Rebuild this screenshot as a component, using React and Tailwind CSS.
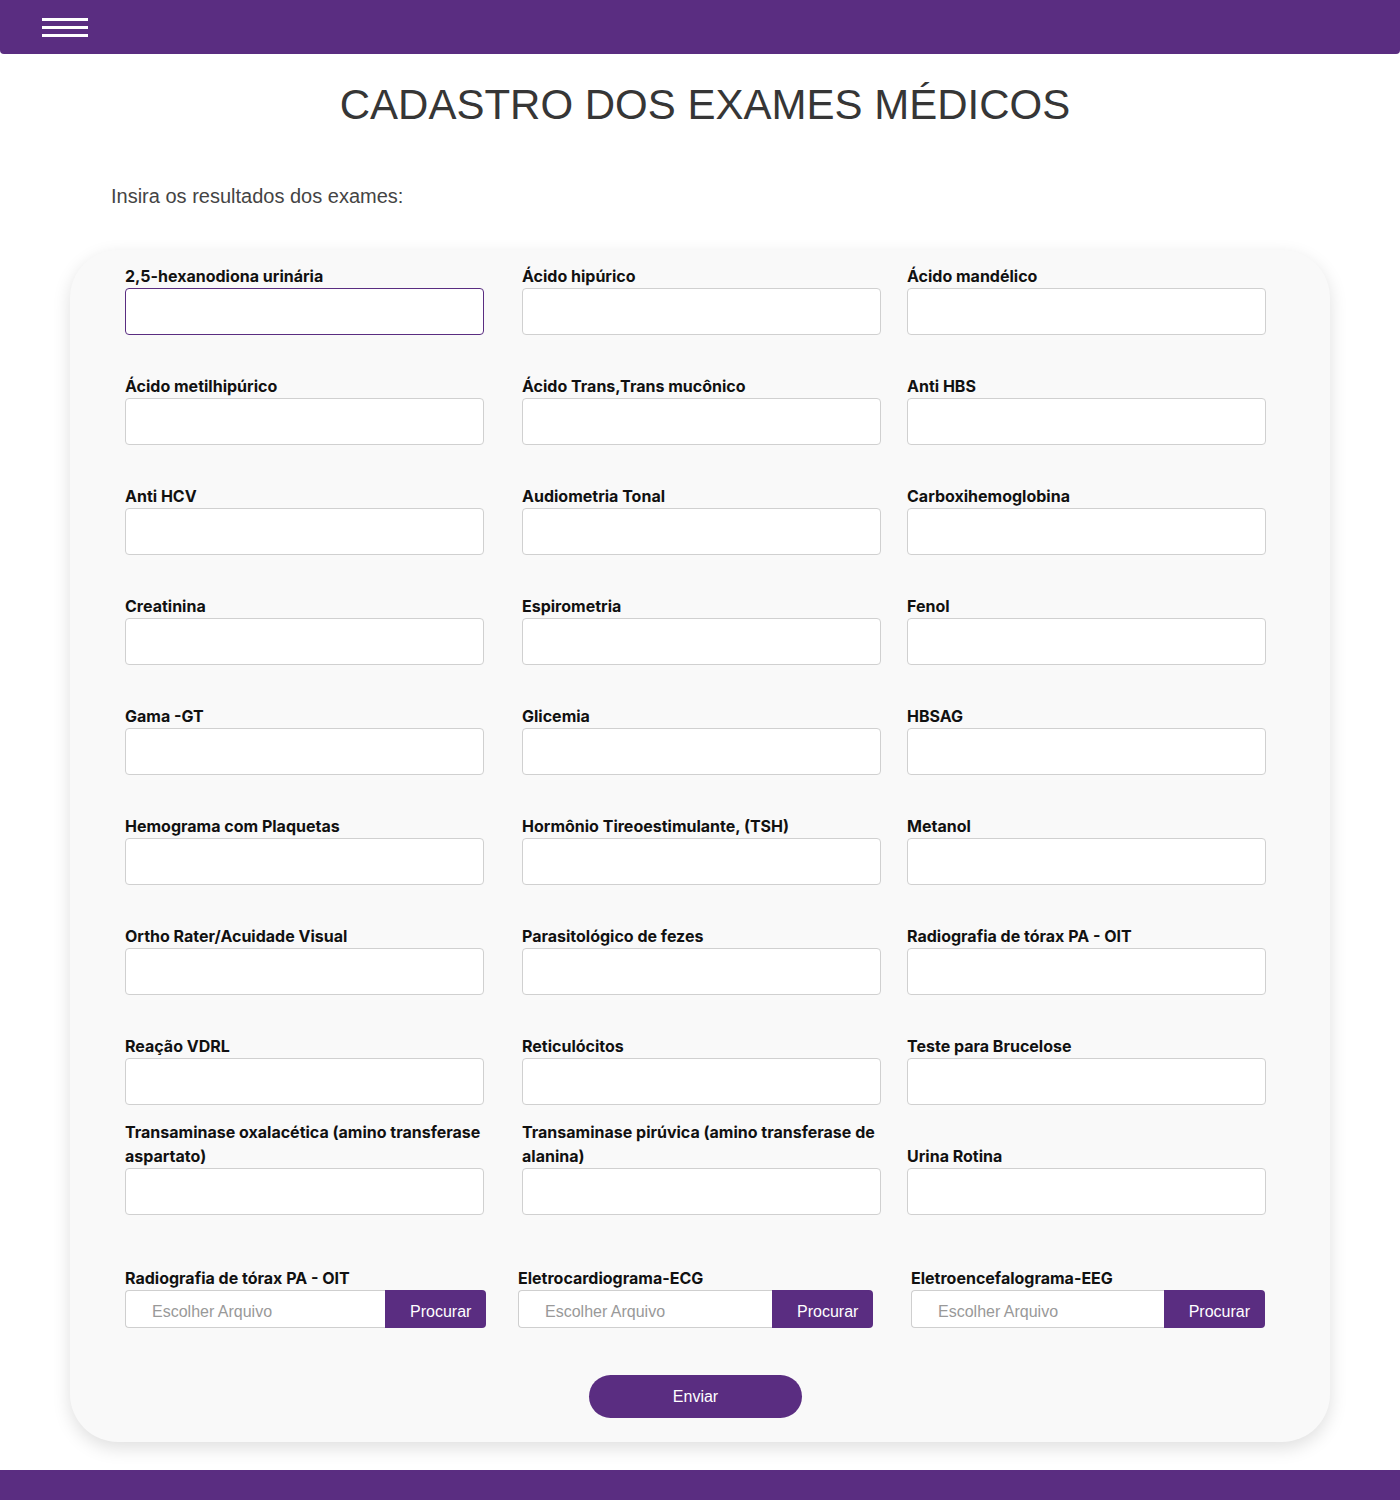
const exames = [
  '2,5-hexanodiona urinária',
  'Ácido hipúrico',
  'Ácido mandélico',
  'Ácido metilhipúrico',
  'Ácido Trans,Trans mucônico',
  'Anti HBS',
  'Anti HCV',
  'Audiometria Tonal',
  'Carboxihemoglobina',
  'Creatinina',
  'Espirometria',
  'Fenol',
  'Gama -GT',
  'Glicemia',
  'HBSAG',
  'Hemograma com Plaquetas',
  'Hormônio Tireoestimulante, (TSH)',
  'Metanol',
  'Ortho Rater/Acuidade Visual',
  'Parasitológico de fezes',
  'Radiografia de tórax PA - OIT',
  'Reação VDRL',
  'Reticulócitos',
  'Teste para Brucelose',
  'Transaminase oxalacética (amino transferase aspartato)',
  'Transaminase pirúvica (amino transferase de alanina)',
  'Urina Rotina',
];

const arquivos = [
  { label: 'Radiografia de tórax PA - OIT', input: 'w-[260px]' },
  { label: 'Eletrocardiograma-ECG', input: 'w-[254px]' },
  { label: 'Eletroencefalograma-EEG', input: 'w-[255px]' },
];

export default function App() {
  return (
    <div className="min-h-[1500px] bg-white flex flex-col font-['Liberation_Sans',Arial,sans-serif]">
      {/* Header */}
      <header className="h-[54px] bg-[#5a2d81] rounded-b-[4px] flex items-center pl-[42px]">
        <div className="flex flex-col gap-[5px] w-[46px]">
          <span className="block h-[3px] bg-white" />
          <span className="block h-[3px] bg-white" />
          <span className="block h-[3px] bg-white" />
        </div>
      </header>

      <h1 className="mt-[27px] pl-[10px] text-center text-[42px] leading-[48px] text-[#363636]">
        CADASTRO DOS EXAMES MÉDICOS
      </h1>

      <p className="mt-[56px] ml-[111px] text-[20px] leading-[23px] text-[#444]">
        Insira os resultados dos exames:
      </p>

      {/* Card */}
      <div className="mx-[70px] mt-[42px] mb-[28px] bg-[#f9f9f9] rounded-[48px] shadow-[0_6px_18px_rgba(0,0,0,0.13)] pt-[14px] pb-[24px] pl-[55px] pr-[64px] font-['Inter',sans-serif]">
        <div className="grid grid-cols-[397px_385px_359px] grid-rows-[71px_repeat(8,110px)]">
          {exames.map((nome, i) => (
            <div key={i} className="flex flex-col justify-end">
              <label className="text-[16px] leading-6 font-bold text-[#111] pr-2">
                {nome}
              </label>
              <input
                type="text"
                className={
                  i === 0
                    ? 'w-[359px] h-[47px] bg-white rounded-[4px] border border-[#5a2d81] outline-none'
                    : 'w-[359px] h-[47px] bg-white rounded-[4px] border border-[#d0d0d0] outline-none'
                }
              />
            </div>
          ))}
        </div>

        {/* Arquivos */}
        <div className="grid grid-cols-[393px_393px_354px] mt-[51px]">
          {arquivos.map((a, i) => (
            <div key={i} className="flex flex-col">
              <label className="text-[16px] leading-6 font-bold text-[#111]">{a.label}</label>
              <div className="flex h-[38px]">
                <div
                  className={`${a.input} h-full bg-white border border-[#cfcfcf] border-r-0 rounded-l-[4px] flex items-center pt-[5px] pl-[26px] text-[16px] text-[#999] font-['Liberation_Sans',Arial,sans-serif]`}
                >
                  Escolher Arquivo
                </div>
                <button className="h-full bg-[#5a2d81] text-white text-[16px] rounded-r-[4px] pt-[5px] pl-[25px] pr-[15px] font-['Liberation_Sans',Arial,sans-serif]">
                  Procurar
                </button>
              </div>
            </div>
          ))}
        </div>

        <div className="flex justify-center mt-[47px]">
          <button className="w-[213px] h-[43px] rounded-full bg-[#5a2d81] text-white text-[16px] font-['Liberation_Sans',Arial,sans-serif]">
            Enviar
          </button>
        </div>
      </div>

      {/* Footer */}
      <footer className="mt-auto h-[30px] bg-[#5a2d81]" />
    </div>
  );
}
